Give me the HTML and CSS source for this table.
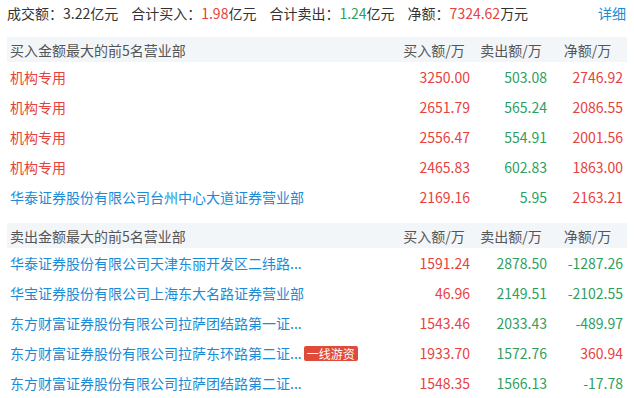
FILE: index.html
```html
<!DOCTYPE html>
<html lang="zh-CN">
<head>
<meta charset="utf-8">
<link rel="stylesheet" href="styles.css">
</head>
<body>
<div class="page">
  <div class="summary">
    <span class="item">成交额：<span>3.22</span>亿元</span>
    <span class="item">合计买入：<span class="up">1.98</span>亿元</span>
    <span class="item">合计卖出：<span class="down">1.24</span>亿元</span>
    <span class="item">净额：<span class="up">7324.62</span>万元</span>
    <a class="more">详细</a>
  </div>

  <div class="table">
    <div class="row head">
      <div class="name">买入金额最大的前5名营业部</div>
      <div class="col">买入额/万</div>
      <div class="col">卖出额/万</div>
      <div class="col">净额/万</div>
    </div>
    <div class="row">
      <div class="name"><span class="org">机构专用</span></div>
      <div class="num up">3250.00</div>
      <div class="num down">503.08</div>
      <div class="num up">2746.92</div>
    </div>
    <div class="row">
      <div class="name"><span class="org">机构专用</span></div>
      <div class="num up">2651.79</div>
      <div class="num down">565.24</div>
      <div class="num up">2086.55</div>
    </div>
    <div class="row">
      <div class="name"><span class="org">机构专用</span></div>
      <div class="num up">2556.47</div>
      <div class="num down">554.91</div>
      <div class="num up">2001.56</div>
    </div>
    <div class="row">
      <div class="name"><span class="org">机构专用</span></div>
      <div class="num up">2465.83</div>
      <div class="num down">602.83</div>
      <div class="num up">1863.00</div>
    </div>
    <div class="row">
      <div class="name"><a class="link">华泰证券股份有限公司台州中心大道证券营业部</a></div>
      <div class="num up">2169.16</div>
      <div class="num down">5.95</div>
      <div class="num up">2163.21</div>
    </div>
  </div>

  <div class="table second">
    <div class="row head">
      <div class="name">卖出金额最大的前5名营业部</div>
      <div class="col">买入额/万</div>
      <div class="col">卖出额/万</div>
      <div class="col">净额/万</div>
    </div>
    <div class="row">
      <div class="name"><a class="link">华泰证券股份有限公司天津东丽开发区二纬路...</a></div>
      <div class="num up">1591.24</div>
      <div class="num down">2878.50</div>
      <div class="num down">-1287.26</div>
    </div>
    <div class="row">
      <div class="name"><a class="link">华宝证券股份有限公司上海东大名路证券营业部</a></div>
      <div class="num up">46.96</div>
      <div class="num down">2149.51</div>
      <div class="num down">-2102.55</div>
    </div>
    <div class="row">
      <div class="name"><a class="link">东方财富证券股份有限公司拉萨团结路第一证...</a></div>
      <div class="num up">1543.46</div>
      <div class="num down">2033.43</div>
      <div class="num down">-489.97</div>
    </div>
    <div class="row">
      <div class="name"><a class="link">东方财富证券股份有限公司拉萨东环路第二证...</a><span class="badge">一线游资</span></div>
      <div class="num up">1933.70</div>
      <div class="num down">1572.76</div>
      <div class="num up">360.94</div>
    </div>
    <div class="row">
      <div class="name"><a class="link">东方财富证券股份有限公司拉萨团结路第二证...</a></div>
      <div class="num up">1548.35</div>
      <div class="num down">1566.13</div>
      <div class="num down">-17.78</div>
    </div>
  </div>
</div>
</body>
</html>
```

FILE: styles.css
```css
* { box-sizing: border-box; }
html, body { margin: 0; padding: 0; background: #fff; }
body {
  font-family: "Noto Sans CJK SC", "Noto Sans", sans-serif;
  font-size: 14px;
  color: #333;
}
.page { padding: 0 7px; }
.summary {
  display: flex;
  align-items: center;
  height: 25px;
  margin-bottom: 12px;
  white-space: nowrap;
}
.summary .item { margin-right: 13px; }
.summary .more { margin-left: auto; margin-right: 1px; color: #1a8bd6; cursor: pointer; }
.up { color: #e8413e; }
.down { color: #2e9f61; }
.table.second { margin-top: 11px; }
.row {
  display: grid;
  grid-template-columns: 1fr 77px 77px 76px;
  height: 30px;
  align-items: center;
  padding-right: 4px;
  white-space: nowrap;
}
.row.head {
  height: 25px;
  background: #f3f6f9;
  color: #555;
}
.name {
  padding-left: 3px;
  display: flex;
  align-items: center;
  overflow: hidden;
}
.org { color: #e8413e; }
.link { color: #1a8bd6; cursor: pointer; }
.col { text-align: center; padding-left: 5px; }
.num { text-align: right; }
.badge {
  margin-left: 2px;
  background: #df4a3b;
  color: #fff;
  font-size: 12px;
  line-height: 15px;
  height: 15px;
  padding: 0 3px;
  border-radius: 2px;
}
```
